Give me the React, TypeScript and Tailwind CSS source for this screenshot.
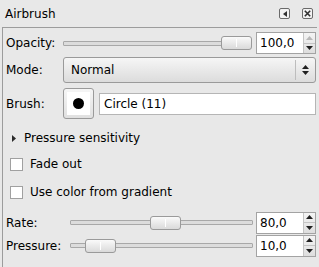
import React from "react";

const font = { fontFamily: '"DejaVu Sans", Verdana, sans-serif' };

const Spin = ({ value, top }: { value: string; top?: boolean }) => (
  <div className="flex h-[22px] w-[60px] shrink-0 border border-[#a3a3a3] bg-white">
    <div className="flex flex-1 items-center pl-[3px] text-[12px]">{value}</div>
    <div className="flex w-[12px] flex-col border-l border-[#c4c4c4] bg-gradient-to-b from-[#f4f4f4] to-[#dedede]">
      <div className="flex flex-1 items-center justify-center border-b border-[#c4c4c4]">
        <svg width="7" height="4" viewBox="0 0 7 4">
          <path d="M0 4 L3.5 0 L7 4 Z" fill={top ? "#b8b8b8" : "#202020"} />
        </svg>
      </div>
      <div className="flex flex-1 items-center justify-center">
        <svg width="7" height="4" viewBox="0 0 7 4">
          <path d="M0 0 L3.5 4 L7 0 Z" fill="#202020" />
        </svg>
      </div>
    </div>
  </div>
);

const Slider = ({ pos }: { pos: number }) => (
  <div className="relative flex h-full flex-1 items-center">
    <div className="h-[5px] w-full rounded-[1px] border border-[#a8a8a8] bg-[#dcdcdc]" />
    <div
      className="absolute top-1/2 flex h-[14px] w-[31px] -translate-y-1/2 justify-center rounded-[3px] border border-[#9a9a9a] bg-gradient-to-b from-[#fafafa] to-[#dadada]"
      style={{ left: pos }}
    >
      <div className="my-[2px] w-[1px] bg-white" />
    </div>
  </div>
);

const Check = ({ label, className }: { label: string; className: string }) => (
  <div className={`flex h-[18px] items-center ${className}`}>
    <div className="ml-[4px] h-[13px] w-[13px] border border-[#a0a0a0] bg-white" />
    <span className="ml-[7px]">{label}</span>
  </div>
);

export default function App() {
  return (
    <div
      className="flex h-[267px] w-[319px] flex-col overflow-hidden bg-[#e8e8e8] text-[12px] leading-none text-black"
      style={font}
    >
      <div className="flex h-[27px] shrink-0 items-center justify-between pl-[5px] pr-[6px]">
        <span>Airbrush</span>
        <div className="flex items-center gap-[12px]">
          <div className="flex h-[11px] w-[11px] items-center justify-center rounded-[2px] border border-[#6a6a6a] bg-[#f2f2f2]">
            <svg width="4" height="6" viewBox="0 0 4 6">
              <path d="M4 0 L0 3 L4 6 Z" fill="#303030" />
            </svg>
          </div>
          <div className="flex h-[11px] w-[11px] items-center justify-center rounded-[2px] border border-[#6a6a6a] bg-[#f2f2f2]">
            <svg width="7" height="7" viewBox="0 0 7 7">
              <path d="M0.8 0.8 L6.2 6.2 M6.2 0.8 L0.8 6.2" stroke="#303030" strokeWidth="1.6" />
            </svg>
          </div>
        </div>
      </div>

      <div className="ml-[2px] flex w-[315px] flex-1 flex-col border-l border-t border-[#9c9c9c] pl-[3px] pr-[1px]">
        <div className="mt-[4px] flex h-[22px] items-center">
          <span className="w-[57px] shrink-0">Opacity:</span>
          <Slider pos={158} />
          <div className="ml-[5px]">
            <Spin value="100,0" top />
          </div>
        </div>

        <div className="mt-[3px] flex h-[26px] items-center">
          <span className="w-[57px] shrink-0">Mode:</span>
          <div className="flex h-[26px] flex-1 items-center rounded-[3px] border border-[#9a9a9a] bg-gradient-to-b from-[#f6f6f6] to-[#dcdcdc]">
            <span className="flex-1 pl-[7px]">Normal</span>
            <div className="h-[20px] w-[1px] bg-[#bdbdbd]" />
            <div className="flex w-[19px] flex-col items-center gap-[2px]">
              <svg width="7" height="4" viewBox="0 0 7 4">
                <path d="M0 4 L3.5 0 L7 4 Z" fill="#202020" />
              </svg>
              <svg width="7" height="4" viewBox="0 0 7 4">
                <path d="M0 0 L3.5 4 L7 0 Z" fill="#202020" />
              </svg>
            </div>
          </div>
        </div>

        <div className="mt-[5px] flex h-[31px] items-center">
          <span className="w-[57px] shrink-0">Brush:</span>
          <div className="flex h-[31px] w-[31px] items-center justify-center rounded-[3px] border border-[#9a9a9a] bg-gradient-to-b from-[#f6f6f6] to-[#e0e0e0]">
            <div className="flex h-[23px] w-[23px] items-center justify-center bg-white">
              <div className="h-[11px] w-[11px] rounded-full bg-black" />
            </div>
          </div>
          <div className="ml-[5px] flex h-[22px] flex-1 items-center border border-[#b5b5b5] bg-white pl-[4px]">
            Circle (11)
          </div>
        </div>

        <div className="mt-[10px] flex h-[18px] items-center">
          <svg className="ml-[6px]" width="4" height="7" viewBox="0 0 4 7">
            <path d="M0 0 L4 3.5 L0 7 Z" fill="#2a2a2a" />
          </svg>
          <span className="ml-[8px]">Pressure sensitivity</span>
        </div>

        <Check label="Fade out" className="mt-[8px]" />
        <Check label="Use color from gradient" className="mt-[10px]" />

        <div className="mt-[10px] flex h-[23px] items-center">
          <span className="w-[64px] shrink-0">Rate:</span>
          <Slider pos={80} />
          <div className="ml-[3px]">
            <Spin value="80,0" />
          </div>
        </div>
        <div className="flex h-[23px] items-center">
          <span className="w-[64px] shrink-0">Pressure:</span>
          <Slider pos={15} />
          <div className="ml-[3px]">
            <Spin value="10,0" />
          </div>
        </div>
      </div>
    </div>
  );
}
